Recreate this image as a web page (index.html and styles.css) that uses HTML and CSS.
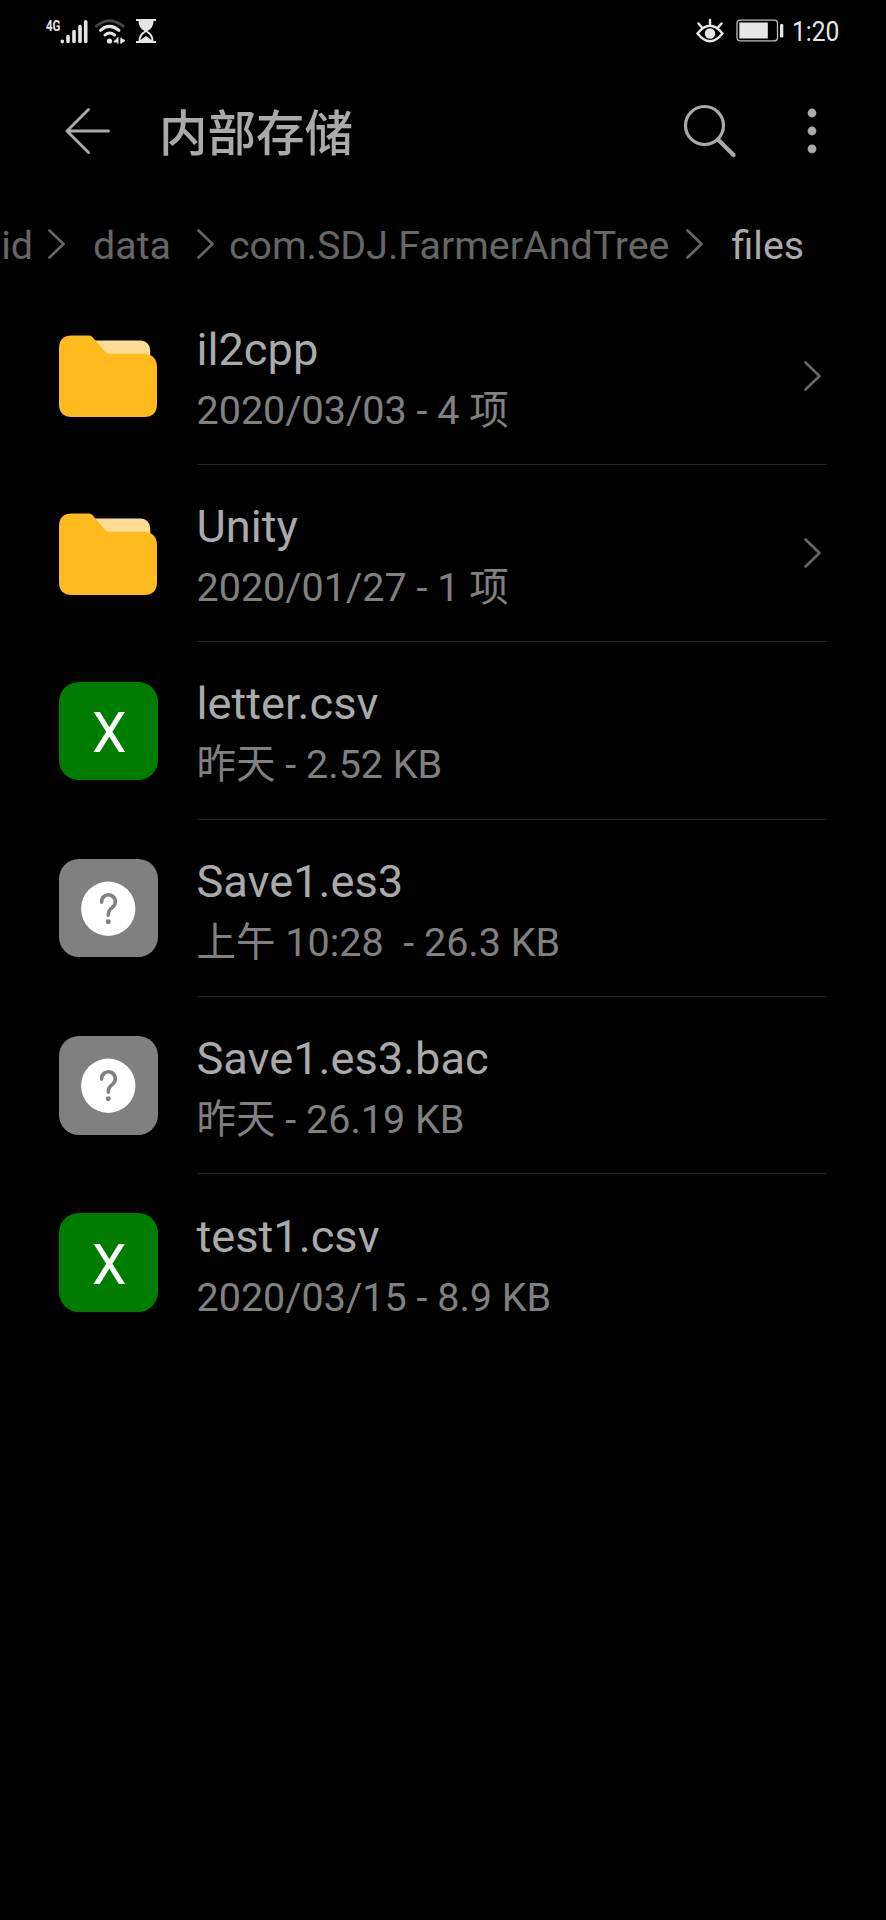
FILE: index.html
```html
<!DOCTYPE html>
<html lang="zh-CN">
<head>
<meta charset="utf-8">
<title>内部存储</title>
<link rel="stylesheet" href="styles.css">
</head>
<body>
<svg class="defs" width="0" height="0">
  <symbol id="chevron" viewBox="0 0 20 34"><path d="M2.500 3.500 16.500 17 2.500 30.500" fill="none" stroke="currentColor" stroke-width="2.700" stroke-linecap="round" stroke-linejoin="round"/></symbol>
  <symbol id="folder" viewBox="0 0 99 99">
    <path d="M30 13.500H82a9.500 9.500 0 0 1 9.700 9.500V40H40Z" fill="#ffdc93"/>
    <path d="M13 8.500H30.500Q32.500 8.500 34 10.500L46 24.500Q48 27 51 27H87Q98.500 29 98.500 40.500V77.500Q98.500 90.500 85.500 90.500H13Q0 90.500 0 77.500V21.500Q0 8.500 13 8.500Z" fill="#ffbb1e"/>
  </symbol>
  <symbol id="unknown" viewBox="0 0 99 99">
    <circle cx="49.500" cy="50" r="27.300" fill="#fff"/>
    <path d="M42.800 43.300A6.900 6.900 0 1 1 53.800 48.400Q49.500 51.300 49.500 56.500" fill="none" stroke="#808080" stroke-width="3.600" stroke-linecap="round"/>
    <circle cx="49.500" cy="63" r="2.500" fill="#808080"/>
  </symbol>
</svg>
<div class="statusbar">
  <svg class="signals" width="80" height="28" viewBox="0 0 80 28">
    <text class="net" x="0" y="13.500" textLength="14.500" lengthAdjust="spacingAndGlyphs">4G</text>
    <g stroke="#e6e6e6" stroke-width="3.600" stroke-linecap="round">
      <path d="M16.300 24.300V24.600M22 19.500V24.500M28 14.500V24.500M34 9.500V24.500M39.700 4.800V24.500"/>
    </g>
    <g fill="none" stroke-width="3" stroke-linecap="round">
      <path d="M50.500 9Q63.500-1.500 77 9" stroke="#444"/>
      <path d="M54.500 13.300Q63.500 5.500 73 13.300M59 18Q63.500 14 68.500 18" stroke="#e6e6e6"/>
    </g>
    <circle cx="63.500" cy="24" r="2.600" fill="#e6e6e6"/>
    <path d="M72 20.300V27M72 20.500 67.800 25H72M75 27V20.500M75 21.500 79 23.500 75 26Z" fill="#e6e6e6" stroke="#e6e6e6" stroke-width="1"/>
  </svg>
  <svg class="hourglass" width="20" height="26" viewBox="0 0 20 26">
    <path d="M0 1H20V3H17.500Q17.500 10 11.500 13Q17.500 16 17.500 23H20V25H0V23H2.500Q2.500 16 8.500 13Q2.500 10 2.500 3H0Z" fill="#e6e6e6"/>
    <path d="M4.500 22Q5 17 10 14Q15 17 15.500 22L10 18Z" fill="#000"/>
  </svg>
  <svg class="eye" width="28" height="26" viewBox="0 0 28 26">
    <g fill="none" stroke="#e6e6e6" stroke-width="2.400" stroke-linecap="round">
      <path d="M1.500 15.500Q14 0 26.500 15.500Q14 31 1.500 15.500ZM14 6V2M5.500 9 2.500 5.500M22.500 9 25.500 5.500"/>
    </g>
    <circle cx="14" cy="15.500" r="5.200" fill="#e6e6e6"/>
  </svg>
  <svg class="battery" width="48" height="24" viewBox="0 0 48 24">
    <rect x="1" y="1.200" width="40.500" height="20.600" rx="3" fill="none" stroke="#bdbdbd" stroke-width="1.300"/>
    <rect x="3.300" y="3.500" width="28.500" height="16" fill="#e6e6e6"/>
    <rect x="44" y="5" width="3.300" height="13.500" rx="1.200" fill="#e6e6e6"/>
  </svg>
  <span class="clock">1:20</span>
</div>
<div class="header">
  <svg class="back" width="48" height="48" viewBox="0 0 48 48"><path d="M24.500 2.500 3 24 24.500 45.500M3 24H44.500" fill="none" stroke="#aaa" stroke-width="2.900" stroke-linecap="round" stroke-linejoin="round"/></svg>
  <h1>内部存储</h1>
  <svg class="search" width="54" height="54" viewBox="0 0 54 54"><circle cx="21.500" cy="21.500" r="19" fill="none" stroke="#aaa" stroke-width="3.200"/><path d="M35.500 36 50.500 51" stroke="#aaa" stroke-width="4.200" stroke-linecap="round"/></svg>
  <svg class="more" width="10" height="46" viewBox="0 0 10 46"><g fill="#aaa"><circle cx="5" cy="5" r="4.400"/><circle cx="5" cy="23" r="4.400"/><circle cx="5" cy="40.800" r="4.400"/></g></svg>
</div>
<div class="crumbs">
  <span class="crumb tail">id</span>
  <svg class="sep sep-1"><use href="#chevron"/></svg>
  <span class="crumb">data</span>
  <svg class="sep sep-2"><use href="#chevron"/></svg>
  <span class="crumb">com.SDJ.FarmerAndTree</span>
  <svg class="sep sep-3"><use href="#chevron"/></svg>
  <span class="crumb current">files</span>
</div>
<div class="list">
  <div class="row"><svg class="icon"><use href="#folder"/></svg><div class="body"><div class="text"><div class="name">il2cpp</div><div class="meta">2020/03/03 - 4 项</div></div><svg class="go"><use href="#chevron"/></svg></div></div>
  <div class="row"><svg class="icon"><use href="#folder"/></svg><div class="body"><div class="text"><div class="name">Unity</div><div class="meta">2020/01/27 - 1 项</div></div><svg class="go"><use href="#chevron"/></svg></div></div>
  <div class="row"><div class="icon sheet"><span>X</span></div><div class="body"><div class="text"><div class="name">letter.csv</div><div class="meta">昨天 - 2.52 KB</div></div></div></div>
  <div class="row"><svg class="icon other"><use href="#unknown"/></svg><div class="body"><div class="text"><div class="name">Save1.es3</div><div class="meta">上午 10:28  - 26.3 KB</div></div></div></div>
  <div class="row"><svg class="icon other"><use href="#unknown"/></svg><div class="body"><div class="text"><div class="name">Save1.es3.bac</div><div class="meta">昨天 - 26.19 KB</div></div></div></div>
  <div class="row"><div class="icon sheet"><span>X</span></div><div class="body"><div class="text"><div class="name">test1.csv</div><div class="meta">2020/03/15 - 8.9 KB</div></div></div></div>
</div>
</body>
</html>
```
FILE: styles.css
```css
* { box-sizing: border-box; }
body {
  margin: 0;
  height: 1920px;
  background: #000;
  overflow: hidden;
  font-family: Roboto, "Noto Sans CJK SC", sans-serif;
}
svg { display: block; flex: none; }
.defs { position: absolute; }
.statusbar {
  display: flex;
  align-items: center;
  height: 62px;
  padding: 0 45px 0 46px;
}
.net { font-size: 15px; font-weight: 700; fill: #e6e6e6; }
.hourglass { margin-left: 10px; }
.eye { margin-left: auto; }
.battery { margin-left: 12px; }
.clock {
  width: 49px;
  margin-left: 8px;
  padding-top: 1px;
  font-size: 28.5px;
  line-height: 60px;
  color: #e6e6e6;
  white-space: nowrap;
  transform: scaleX(0.86);
  transform-origin: left center;
}
.header {
  display: flex;
  align-items: center;
  height: 138px;
  padding: 0 69px 0 64px;
}
h1 {
  margin: 0 auto 0 47px;
  padding-bottom: 3px;
  font-family: "Noto Sans CJK SC", sans-serif;
  font-size: 48.5px;
  font-weight: 500;
  line-height: 60px;
  color: #aaa;
}
.more { margin-left: 70px; }
.crumbs {
  display: flex;
  align-items: center;
  height: 88px;
  font-size: 39.4px;
  line-height: 60px;
  color: #666;
  white-space: nowrap;
}
.crumb { flex: none; padding-top: 3px; }
.tail { width: 33px; display: flex; justify-content: flex-end; }
.current { color: #aaa; }
.sep { width: 20px; height: 34px; }
.sep-1 { margin: 0 26px 0 14px; }
.sep-2 { margin: 0 13px 0 25px; }
.sep-3 { margin: 0 27px 0 15px; }
.list { display: flex; flex-direction: column; }
.row {
  display: flex;
  align-items: center;
  gap: 39px;
  height: 177.2px;
  padding: 0 59px;
}
.icon { width: 98.5px; height: 98.5px; flex: none; }
.other { border-radius: 20px; background: #808080; }
.sheet {
  display: flex;
  justify-content: center;
  align-items: center;
  padding: 4px 0 0 2px;
  border-radius: 20px;
  background: #007d00;
  color: #fff;
  font-size: 55px;
  line-height: 60px;
}
.body {
  display: flex;
  align-items: center;
  justify-content: space-between;
  flex: 1;
  height: 100%;
  border-bottom: 1px solid #262626;
}
.row:last-child .body { border-bottom: 0; }
.text { padding-top: 9px; }
.name { font-size: 45.2px; line-height: 60px; color: #aaa; }
.meta { font-size: 39.5px; line-height: 61px; color: #808080; white-space: pre; }
.go { width: 20px; height: 34px; margin-right: 4px; color: #666; }
```
